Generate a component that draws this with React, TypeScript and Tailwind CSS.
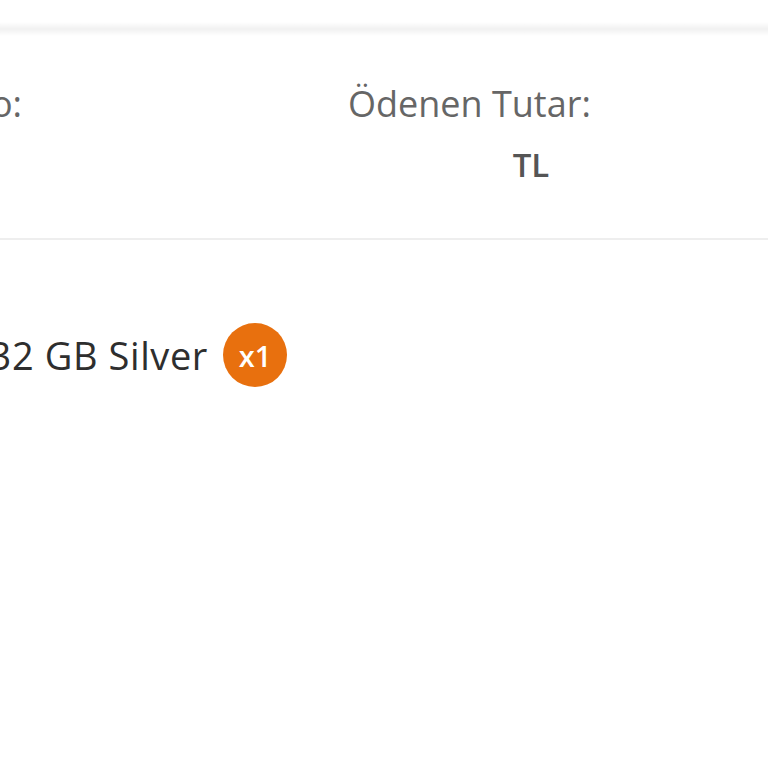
export default function App() {
  const font = { fontFamily: '"Open Sans", "DejaVu Sans", sans-serif' };
  return (
    <div className="w-[768px] h-[768px] bg-white overflow-hidden" style={font}>
      <div className="h-[22px] bg-white" />
      <div className="h-[14px] bg-gradient-to-b from-white via-[#f1f1f1] to-white" />
      <div className="flex flex-col">
        <div className="flex pt-[50px] pb-[57px] border-b-2 border-[#eeeeee]">
          <div className="w-[22px] flex flex-col items-end overflow-hidden shrink-0">
            <div className="whitespace-nowrap text-[36px] leading-none text-[#666666]">Sipariş No:</div>
          </div>
          <div className="ml-[326px] w-[366px] flex flex-col">
            <div className="whitespace-nowrap text-[36px] leading-none text-[#666666]">Ödenen Tutar:</div>
            <div className="mt-[26px] text-center text-[33px] leading-none font-semibold text-[#555555]">TL</div>
          </div>
        </div>
        <div className="flex items-center mt-[83px] gap-[15px]">
          <div className="w-[208px] flex justify-end overflow-hidden shrink-0">
            <div className="whitespace-nowrap text-[38px] leading-none tracking-[0.6px] text-[#2e2e2e]">iPhone 11 32 GB Silver</div>
          </div>
          <div className="w-[64px] h-[64px] rounded-full bg-[#e8700e] flex items-center justify-center text-white text-[29px] font-semibold leading-none">
            x1
          </div>
        </div>
      </div>
    </div>
  );
}
